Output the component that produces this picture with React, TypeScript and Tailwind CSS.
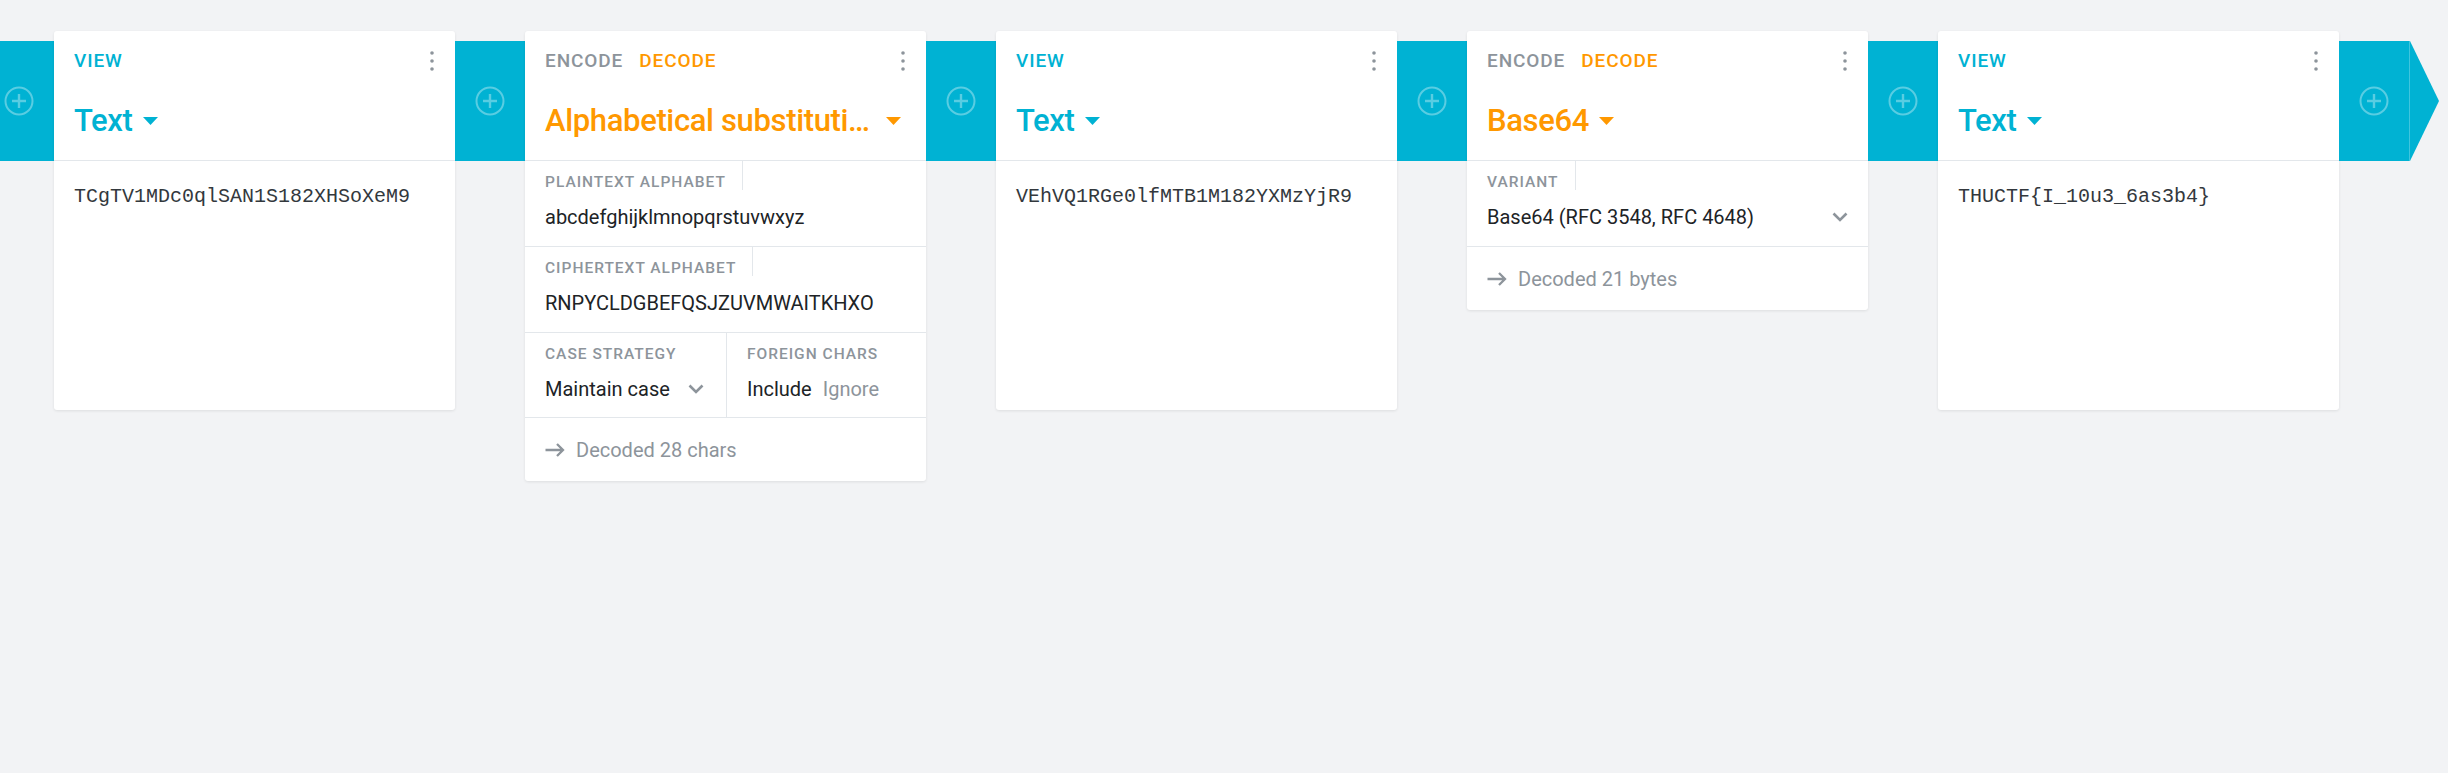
import React from 'react';

const CYAN = '#00b2d3';

function PlusCircle() {
  return (
    <svg width="30" height="30" viewBox="0 0 30 30" fill="none">
      <circle cx="15" cy="15" r="13.5" stroke="rgba(255,255,255,0.35)" strokeWidth="2" />
      <path d="M15 8v14M8 15h14" stroke="rgba(255,255,255,0.35)" strokeWidth="2.4" />
    </svg>
  );
}

function Pipe() {
  return (
    <div className="w-[70px] h-[120px] mt-[10px] shrink-0 bg-[#00b2d3] flex items-center justify-center">
      <PlusCircle />
    </div>
  );
}

function Dots() {
  return (
    <svg width="4" height="20" viewBox="0 0 4 20" className="shrink-0">
      <circle cx="2" cy="2" r="1.8" fill="#8d949b" />
      <circle cx="2" cy="10" r="1.8" fill="#8d949b" />
      <circle cx="2" cy="18" r="1.8" fill="#8d949b" />
    </svg>
  );
}

function Caret({ color }: { color: string }) {
  return (
    <svg width="15" height="8" viewBox="0 0 15 8" className="ml-[10px] shrink-0">
      <path d="M0 0h15L7.5 8z" fill={color} />
    </svg>
  );
}

function Chevron() {
  return (
    <svg width="16" height="10" viewBox="0 0 16 10" fill="none" className="shrink-0">
      <path d="M1.5 1.5 8 8l6.5-6.5" stroke="#8d949b" strokeWidth="2.6" />
    </svg>
  );
}

function Arrow() {
  return (
    <svg width="20" height="14" viewBox="0 0 20 14" fill="none" className="shrink-0">
      <path d="M0.5 7h17.5M12 1l6 6-6 6" stroke="#8d949b" strokeWidth="2.3" />
    </svg>
  );
}

type BrickProps = {
  kind: 'view' | 'encoder';
  title: string;
  children: React.ReactNode;
};

function Brick({ kind, title, children }: BrickProps) {
  const color = kind === 'view' ? CYAN : '#ff9800';
  return (
    <div className="w-[401px] shrink-0 bg-white rounded-[3px] shadow-[0_1px_3px_rgba(0,0,0,0.09)]">
      <div className="px-5 pt-[18px] pb-[19px] border-b border-[#e3e7eb]">
        <div className="flex items-center justify-between h-6 pr-[1px]">
          <div className="flex gap-[16px] text-[19px] leading-6 font-medium tracking-[0.9px]">
            {kind === 'view' ? (
              <span className="text-[#00b2d3]">VIEW</span>
            ) : (
              <>
                <span className="text-[#8d949b]">ENCODE</span>
                <span className="text-[#ff9800]">DECODE</span>
              </>
            )}
          </div>
          <Dots />
        </div>
        <div className="mt-7 h-10 flex items-center pr-[5px]">
          <span className="truncate text-[31px] leading-10 font-medium tracking-[-0.35px]" style={{ color }}>
            {title}
          </span>
          <Caret color={color} />
        </div>
      </div>
      {children}
    </div>
  );
}

function Label({ text, bordered = true }: { text: string; bordered?: boolean }) {
  return (
    <div
      className={
        'w-fit pt-[13px] pr-4 text-[15.5px] leading-4 font-medium tracking-[1px] text-[#8d949b] ' +
        (bordered ? 'border-r border-[#e3e7eb]' : '')
      }
    >
      {text}
    </div>
  );
}

function Setting({ label, children }: { label: string; children: React.ReactNode }) {
  return (
    <div className="px-5 pb-[15px] border-b border-[#e3e7eb]">
      <Label text={label} />
      <div className="mt-[13px] h-7 text-[20px] leading-7 text-[#202326]">{children}</div>
    </div>
  );
}

function Status({ text }: { text: string }) {
  return (
    <div className="h-[63px] px-5 flex items-center text-[20px] text-[#8d949b]">
      <Arrow />
      <span className="ml-[11px]">{text}</span>
    </div>
  );
}

function ViewBody({ text }: { text: string }) {
  return (
    <div
      className="h-[249px] px-5 pt-[22px] text-[20px] leading-7 text-[#33383d]"
      style={{ fontFamily: '"Liberation Mono", monospace' }}
    >
      {text}
    </div>
  );
}

export default function App() {
  return (
    <div
      className="w-full h-[773px] bg-[#f2f3f5] overflow-hidden pt-[31px]"
      style={{ fontFamily: 'Roboto, "Noto Sans", sans-serif' }}
    >
      <div className="flex items-start ml-[-16px]">
        <Pipe />
        <Brick kind="view" title="Text">
          <ViewBody text="TCgTV1MDc0qlSAN1S182XHSoXeM9" />
        </Brick>
        <Pipe />
        <Brick kind="encoder" title="Alphabetical substitution">
          <Setting label="PLAINTEXT ALPHABET">abcdefghijklmnopqrstuvwxyz</Setting>
          <Setting label="CIPHERTEXT ALPHABET">RNPYCLDGBEFQSJZUVMWAITKHXO</Setting>
          <div className="flex border-b border-[#e3e7eb] h-[85px]">
            <div className="w-[202px] pl-5 pr-[22px] border-r border-[#e3e7eb]">
              <Label text="CASE STRATEGY" bordered={false} />
              <div className="mt-[13px] h-7 flex items-center justify-between text-[20px] text-[#202326]">
                <span>Maintain case</span>
                <Chevron />
              </div>
            </div>
            <div className="flex-1 pl-5">
              <Label text="FOREIGN CHARS" bordered={false} />
              <div className="mt-[13px] h-7 flex items-center gap-[11px] text-[20px]">
                <span className="text-[#202326]">Include</span>
                <span className="text-[#8d949b]">Ignore</span>
              </div>
            </div>
          </div>
          <Status text="Decoded 28 chars" />
        </Brick>
        <Pipe />
        <Brick kind="view" title="Text">
          <ViewBody text="VEhVQ1RGe0lfMTB1M182YXMzYjR9" />
        </Brick>
        <Pipe />
        <Brick kind="encoder" title="Base64">
          <div className="px-5 pb-[15px] border-b border-[#e3e7eb]">
            <Label text="VARIANT" />
            <div className="mt-[13px] h-7 flex items-center justify-between text-[20px] text-[#202326]">
              <span>Base64 (RFC 3548, RFC 4648)</span>
              <Chevron />
            </div>
          </div>
          <Status text="Decoded 21 bytes" />
        </Brick>
        <Pipe />
        <Brick kind="view" title="Text">
          <ViewBody text="THUCTF{I_10u3_6as3b4}" />
        </Brick>
        <Pipe />
        <svg width="30" height="120" viewBox="0 0 30 120" className="mt-[10px] shrink-0">
          <path d="M0 0h1L30 60 1 120H0z" fill={CYAN} />
          <path d="M0.5 0v120" stroke="rgba(255,255,255,0.25)" strokeWidth="1" />
        </svg>
      </div>
    </div>
  );
}
